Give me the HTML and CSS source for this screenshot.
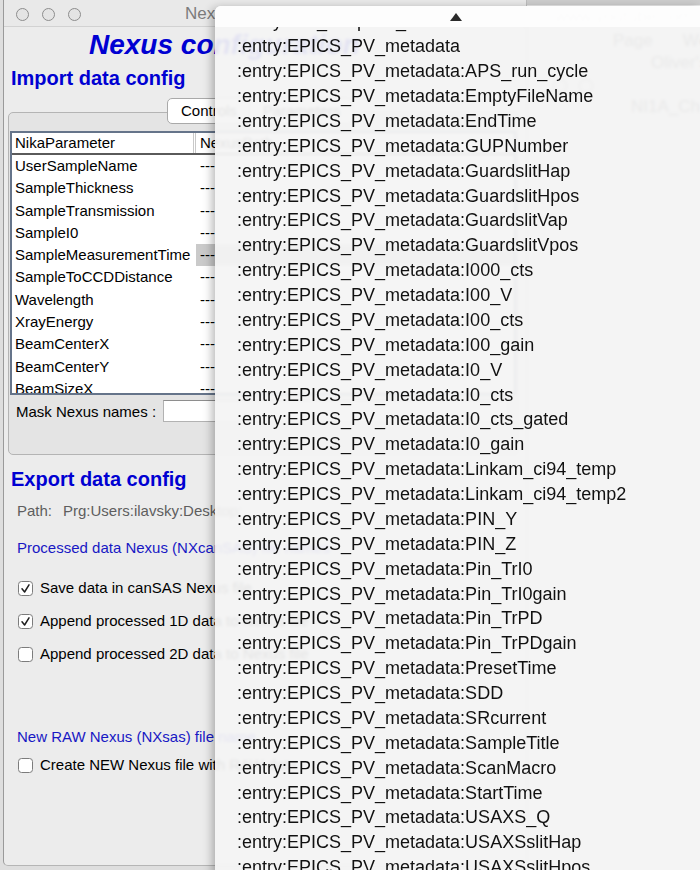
FILE: index.html
```html
<!DOCTYPE html>
<html>
<head>
<meta charset="utf-8">
<link rel="stylesheet" href="styles.css">
</head>
<body>
<div class="desktop">
  <div class="window">
    <div class="titlebar">
      <div class="lights"><span></span><span></span><span></span></div>
      <div class="title">Nexus Configuration</div>
    </div>
    <div class="content">
      <h1 class="main-title">Nexus configuration</h1>
      <h2 class="section">Import data config</h2>
      <div class="tabs"><span class="tab">Controls</span><span class="tab">Parameters</span></div>
      <div class="groupbox">
        <div class="listbox">
          <div class="lb-head">
            <div class="c1">NikaParameter</div>
            <div class="sep"></div>
            <div class="c2">NexusPath</div>
          </div>
          <div class="lb-body">
            <div class="row"><div class="c1">UserSampleName</div><div class="c2">---</div></div>
            <div class="row"><div class="c1">SampleThickness</div><div class="c2">---</div></div>
            <div class="row"><div class="c1">SampleTransmission</div><div class="c2">---</div></div>
            <div class="row"><div class="c1">SampleI0</div><div class="c2">---</div></div>
            <div class="row"><div class="c1">SampleMeasurementTime</div><div class="c2 sel">---</div></div>
            <div class="row"><div class="c1">SampleToCCDDistance</div><div class="c2">---</div></div>
            <div class="row"><div class="c1">Wavelength</div><div class="c2">---</div></div>
            <div class="row"><div class="c1">XrayEnergy</div><div class="c2">---</div></div>
            <div class="row"><div class="c1">BeamCenterX</div><div class="c2">---</div></div>
            <div class="row"><div class="c1">BeamCenterY</div><div class="c2">---</div></div>
            <div class="row"><div class="c1">BeamSizeX</div><div class="c2">---</div></div>
            <div class="row"><div class="c1">BeamSizeY</div><div class="c2">---</div></div>
          </div>
        </div>
        <div class="mask-row"><span class="label">Mask Nexus names :</span><span class="input"></span></div>
      </div>
      <h2 class="section export">Export data config</h2>
      <div class="line path"><span>Path:</span><span class="path-val">Prg:Users:ilavsky:Desktop:</span></div>
      <div class="line blue proc">Processed data Nexus (NXcanSAS) file names</div>
      <div class="line check first"><span class="box on"><svg viewBox="0 0 15 15" width="15" height="15"><path d="M4 7.8 L6.6 11 L11 3.8" fill="none" stroke="#1e1e1e" stroke-width="1.5" stroke-linecap="round" stroke-linejoin="round"/></svg></span>Save data in canSAS Nexus file</div>
      <div class="line check"><span class="box on"><svg viewBox="0 0 15 15" width="15" height="15"><path d="M4 7.8 L6.6 11 L11 3.8" fill="none" stroke="#1e1e1e" stroke-width="1.5" stroke-linecap="round" stroke-linejoin="round"/></svg></span>Append processed 1D data to Nexus file</div>
      <div class="line check"><span class="box"></span>Append processed 2D data to Nexus file</div>
      <div class="line blue raw">New RAW Nexus (NXsas) file name</div>
      <div class="line check create"><span class="box"></span>Create NEW Nexus file with RAW data</div>
    </div>
  </div>
  <div class="behind">
    <div class="b-url">www.youtube.com</div>
    <div class="b-tabs"><span>Page</span><span>We</span></div>
    <div class="b-tab2">Oliver's Q</div>
    <div class="b-dots"><span></span><span></span></div>
    <div class="b-name">NI1A_Check</div>
  </div>
</div>

<div class="menu">
  <div class="menu-top"><span class="arrow"></span></div>
  <div class="menu-scroll">
    <div class="menu-items">
      <div class="mi">:entry:IXD_template_ID</div>
      <div class="mi">:entry:EPICS_PV_metadata</div>
      <div class="mi">:entry:EPICS_PV_metadata:APS_run_cycle</div>
      <div class="mi">:entry:EPICS_PV_metadata:EmptyFileName</div>
      <div class="mi">:entry:EPICS_PV_metadata:EndTime</div>
      <div class="mi">:entry:EPICS_PV_metadata:GUPNumber</div>
      <div class="mi">:entry:EPICS_PV_metadata:GuardslitHap</div>
      <div class="mi">:entry:EPICS_PV_metadata:GuardslitHpos</div>
      <div class="mi">:entry:EPICS_PV_metadata:GuardslitVap</div>
      <div class="mi">:entry:EPICS_PV_metadata:GuardslitVpos</div>
      <div class="mi">:entry:EPICS_PV_metadata:I000_cts</div>
      <div class="mi">:entry:EPICS_PV_metadata:I00_V</div>
      <div class="mi">:entry:EPICS_PV_metadata:I00_cts</div>
      <div class="mi">:entry:EPICS_PV_metadata:I00_gain</div>
      <div class="mi">:entry:EPICS_PV_metadata:I0_V</div>
      <div class="mi">:entry:EPICS_PV_metadata:I0_cts</div>
      <div class="mi">:entry:EPICS_PV_metadata:I0_cts_gated</div>
      <div class="mi">:entry:EPICS_PV_metadata:I0_gain</div>
      <div class="mi">:entry:EPICS_PV_metadata:Linkam_ci94_temp</div>
      <div class="mi">:entry:EPICS_PV_metadata:Linkam_ci94_temp2</div>
      <div class="mi">:entry:EPICS_PV_metadata:PIN_Y</div>
      <div class="mi">:entry:EPICS_PV_metadata:PIN_Z</div>
      <div class="mi">:entry:EPICS_PV_metadata:Pin_TrI0</div>
      <div class="mi">:entry:EPICS_PV_metadata:Pin_TrI0gain</div>
      <div class="mi">:entry:EPICS_PV_metadata:Pin_TrPD</div>
      <div class="mi">:entry:EPICS_PV_metadata:Pin_TrPDgain</div>
      <div class="mi">:entry:EPICS_PV_metadata:PresetTime</div>
      <div class="mi">:entry:EPICS_PV_metadata:SDD</div>
      <div class="mi">:entry:EPICS_PV_metadata:SRcurrent</div>
      <div class="mi">:entry:EPICS_PV_metadata:SampleTitle</div>
      <div class="mi">:entry:EPICS_PV_metadata:ScanMacro</div>
      <div class="mi">:entry:EPICS_PV_metadata:StartTime</div>
      <div class="mi">:entry:EPICS_PV_metadata:USAXS_Q</div>
      <div class="mi">:entry:EPICS_PV_metadata:USAXSslitHap</div>
      <div class="mi">:entry:EPICS_PV_metadata:USAXSslitHpos</div>
      <div class="mi">:entry:EPICS_PV_metadata:USAXSslitVap</div>
    </div>
  </div>
</div>
</body>
</html>
```

FILE: styles.css
```css
* { box-sizing: border-box; }
html, body { margin: 0; padding: 0; }
body {
  width: 700px;
  height: 870px;
  overflow: hidden;
  position: relative;
  background: #c9c9c9;
  font-family: "Liberation Sans", Arial, sans-serif;
  color: #000;
}
.desktop {
  display: flex;
  height: 870px;
  padding-left: 3px;
  background: #dedede;
}
.window {
  width: 524px;
  height: 866px;
  flex: none;
  background: #ececec;
  border-left: 1px solid #9a9a9a;
  border-right: 1px solid #bdbdbd;
  border-bottom: 1px solid #b5b5b5;
  border-radius: 0 0 5px 5px;
  display: flex;
  flex-direction: column;
  overflow: hidden;
}
.titlebar {
  height: 27px;
  flex: none;
  display: flex;
  align-items: center;
  background: #e9e9e9;
  border-bottom: 1px solid #d2d2d2;
}
.lights {
  display: flex;
  gap: 13px;
  padding-left: 12px;
  padding-top: 2px;
}
.lights span {
  width: 13px;
  height: 13px;
  border-radius: 50%;
  border: 1px solid #8d8d8d;
  background: #e4e4e4;
}
.title {
  margin-left: 104px;
  font-size: 17px;
  color: #7c7c7c;
  white-space: nowrap;
  padding-top: 1px;
}
.content {
  flex: 1;
  padding: 0 8px 0 7px;
}
.main-title {
  margin: 2px 0 0;
  padding-left: 78px;
  font: italic bold 28px/32px "Liberation Sans", Arial, sans-serif;
  color: #0000d2;
  white-space: nowrap;
}
.section {
  margin: 5px 0 0;
  font: bold 20px/24px "Liberation Sans", Arial, sans-serif;
  color: #0000d2;
  white-space: nowrap;
}
.section.export { margin-top: 12px; }
.tabs {
  display: flex;
  margin: 8px 0 0 156px;
  height: 26px;
  position: relative;
  z-index: 1;
}
.tab {
  height: 26px;
  padding: 0 12px 0 13px;
  background: #fff;
  border: 1px solid #a9a9a9;
  font-size: 15px;
  line-height: 24px;
  white-space: nowrap;
}
.tab:first-child { border-radius: 5px 0 0 5px; }
.tab:last-child { border-radius: 0 5px 5px 0; border-left: none; }
.groupbox {
  margin: -12px 0 0 -3px;
  height: 343px;
  border: 1px solid #b4b4b4;
  border-radius: 5px;
  background: #e4e4e4;
  padding: 18px 1px 0 1px;
}
.listbox {
  height: 264px;
  background: #fff;
  border: 2px solid #65748a;
  display: flex;
  flex-direction: column;
  font-size: 15px;
  overflow: hidden;
}
.lb-head {
  display: flex;
  height: 22px;
  flex: none;
  border-bottom: 2px solid #5a5a5a;
}
.lb-head .c1 { width: 181px; padding-left: 3px; line-height: 20px; }
.lb-head .sep { width: 3px; border-left: 1px solid #c9c9c9; border-right: 1px solid #c9c9c9; }
.lb-head .c2 { flex: 1; padding-left: 4px; line-height: 20px; }
.lb-body { flex: 1; overflow: hidden; }
.row { display: flex; height: 22.3px; line-height: 22.3px; }
.row .c1 { width: 184px; padding-left: 3px; white-space: nowrap; }
.row .c2 { flex: 1; padding-left: 4px; }
.row .c2.sel { background: #cacaca; }
.mask-row {
  display: flex;
  align-items: center;
  margin-top: 5px;
  height: 22px;
  padding-left: 6px;
  font-size: 15px;
}
.mask-row .label { white-space: nowrap; }
.mask-row .input {
  margin-left: 7px;
  flex: 1;
  height: 22px;
  background: #fff;
  border: 1px solid #b2b2b2;
  border-top-color: #8e8e8e;
  margin-right: 8px;
}
.line {
  font-size: 15px;
  line-height: 20px;
  height: 20px;
  padding-left: 6px;
  white-space: nowrap;
  display: flex;
  align-items: center;
}
.path { margin-top: 10px; color: #5e5e5e; }
.path-val { margin-left: 11px; }
.blue { color: #1818c4; }
.proc { margin-top: 17px; }
.check { margin-top: 13px; }
.check.first { margin-top: 20px; }
.raw { margin-top: 63px; }
.check.create { margin-top: 8px; }
.box {
  width: 15px;
  height: 15px;
  flex: none;
  margin: 0 7px 0 1px;
  border: 1px solid #7c7c7c;
  border-radius: 3.5px;
  background: #fff;
  position: relative;
}
.box svg { position: absolute; left: -1px; top: -1px; }
.behind {
  flex: 1;
  background: #eaeaea;
  border-top: 5px solid #cdcdcd;
  padding-left: 26px;
  color: #555;
  font-size: 17px;
}
.b-url { margin-top: 2px; padding-left: 2px; }
.b-tabs { display: flex; gap: 30px; margin-top: 4px; padding-left: 60px; }
.b-tab2 { margin-top: 2px; padding-left: 98px; }
.b-dots { display: flex; gap: 12px; margin-top: 6px; }
.b-dots span { width: 14px; height: 14px; border-radius: 50%; border: 1px solid #777; }
.b-name { margin-top: 4px; padding-left: 78px; }

.menu {
  position: absolute;
  left: 215px;
  top: 6px;
  width: 485px;
  height: 870px;
  border-radius: 6px 0 0 0;
  background: rgba(244, 244, 244, 0.93);
  backdrop-filter: blur(1.5px);
  box-shadow: -3px 2px 10px rgba(0, 0, 0, 0.28);
  display: flex;
  flex-direction: column;
  overflow: hidden;
  z-index: 5;
}
.menu-top {
  height: 21px;
  flex: none;
  background: rgba(255, 255, 255, 0.85);
  display: flex;
  justify-content: center;
  align-items: center;
  padding-right: 3px;
  position: relative;
  z-index: 1;
}
.arrow {
  width: 0;
  height: 0;
  border-left: 6px solid transparent;
  border-right: 6px solid transparent;
  border-bottom: 8px solid #2a2a2a;
}
.menu-scroll { flex: 1; overflow: hidden; }
.menu-items { margin-top: -17.6px; }
.mi {
  height: 24.88px;
  line-height: 24.88px;
  padding-left: 22px;
  font-size: 18px;
  color: #111;
  white-space: nowrap;
}
```
